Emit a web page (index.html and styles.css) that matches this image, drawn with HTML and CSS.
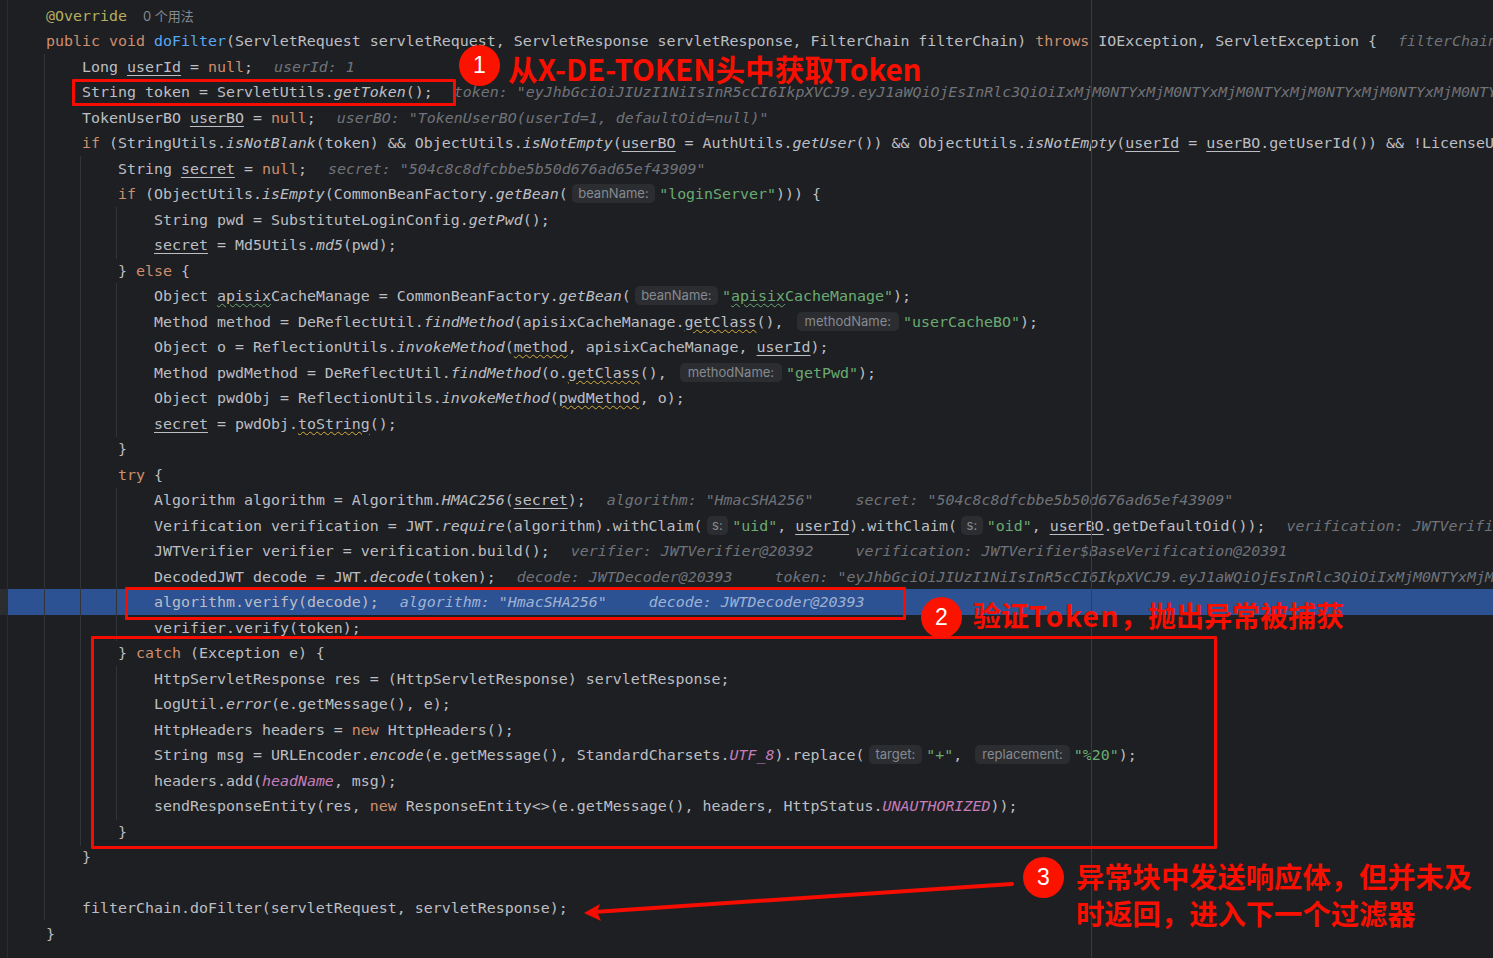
FILE: index.html
```html
<!DOCTYPE html>
<html lang="zh">
<head>
<meta charset="utf-8">
<title>doFilter</title>
<link rel="stylesheet" href="styles.css">
</head>
<body>
<main class="editor">
<div class="line"><span class="ann">@Override</span><span class="usage">0 个用法</span></div>
<div class="line"><span class="kw">public void</span> <span class="fn">doFilter</span>(ServletRequest servletRequest, ServletResponse servletResponse, FilterChain filterChain) <span class="kw">throws</span> IOException, ServletException {<span class="hint">filterChain: ApplicationFilterChain</span></div>
<div class="line i1">Long <u>userId</u> = <span class="kw">null</span>;<span class="hint">userId: 1</span></div>
<div class="line i1">String token = ServletUtils.<i>getToken</i>();<span class="hint">token: "eyJhbGciOiJIUzI1NiIsInR5cCI6IkpXVCJ9.eyJ1aWQiOjEsInRlc3QiOiIxMjM0NTYxMjM0NTYxMjM0NTYxMjM0NTYxMjM0NTYxMjM0NTYxMjM0NTYxMjM0NTYxMjM0NTYxMjM0NTYxMjM0NTY</span></div>
<div class="line i1">TokenUserBO <u>userBO</u> = <span class="kw">null</span>;<span class="hint">userBO: "TokenUserBO(userId=1, defaultOid=null)"</span></div>
<div class="line i1"><span class="kw">if</span> (StringUtils.<i>isNotBlank</i>(token) &amp;&amp; ObjectUtils.<i>isNotEmpty</i>(<u>userBO</u> = AuthUtils.<i>getUser</i>()) &amp;&amp; ObjectUtils.<i>isNotEmpty</i>(<u>userId</u> = <u>userBO</u>.getUserId()) &amp;&amp; !LicenseUtil.isValid()) {</div>
<div class="line i2">String <u>secret</u> = <span class="kw">null</span>;<span class="hint">secret: "504c8c8dfcbbe5b50d676ad65ef43909"</span></div>
<div class="line i2"><span class="kw">if</span> (ObjectUtils.<i>isEmpty</i>(CommonBeanFactory.<i>getBean</i>(<span class="pill pill-bean">beanName:</span><span class="str">"loginServer"</span>))) {</div>
<div class="line i3">String pwd = SubstituteLoginConfig.<i>getPwd</i>();</div>
<div class="line i3"><u>secret</u> = Md5Utils.<i>md5</i>(pwd);</div>
<div class="line i2">} <span class="kw">else</span> {</div>
<div class="line i3">Object <span class="typo">apisix</span>CacheManage = CommonBeanFactory.<i>getBean</i>(<span class="pill pill-bean">beanName:</span><span class="str">"<span class="typo">apisix</span>CacheManage"</span>);</div>
<div class="line i3">Method method = DeReflectUtil.<i>findMethod</i>(apisixCacheManage.<span class="warn">getClass</span>(), <span class="pill pill-method">methodName:</span><span class="str">"userCacheBO"</span>);</div>
<div class="line i3">Object o = ReflectionUtils.<i>invokeMethod</i>(<span class="warn">method</span>, apisixCacheManage, <u>userId</u>);</div>
<div class="line i3">Method pwdMethod = DeReflectUtil.<i>findMethod</i>(o.<span class="warn">getClass</span>(), <span class="pill pill-method">methodName:</span><span class="str">"getPwd"</span>);</div>
<div class="line i3">Object pwdObj = ReflectionUtils.<i>invokeMethod</i>(<span class="warn">pwdMethod</span>, o);</div>
<div class="line i3"><u>secret</u> = pwdObj.<span class="warn">toString</span>();</div>
<div class="line i2">}</div>
<div class="line i2"><span class="kw">try</span> {</div>
<div class="line i3">Algorithm algorithm = Algorithm.<i>HMAC256</i>(<u>secret</u>);<span class="hint">algorithm: "HmacSHA256"</span><span class="hint wide">secret: "504c8c8dfcbbe5b50d676ad65ef43909"</span></div>
<div class="line i3">Verification verification = JWT.<i>require</i>(algorithm).withClaim(<span class="pill pill-short">s:</span><span class="str">"uid"</span>, <u>userId</u>).withClaim(<span class="pill pill-short">s:</span><span class="str">"oid"</span>, <u>userBO</u>.getDefaultOid());<span class="hint">verification: JWTVerifier$BaseVerification@20391</span></div>
<div class="line i3">JWTVerifier verifier = verification.build();<span class="hint">verifier: JWTVerifier@20392</span><span class="hint wide">verification: JWTVerifier$BaseVerification@20391</span></div>
<div class="line i3">DecodedJWT decode = JWT.<i>decode</i>(token);<span class="hint">decode: JWTDecoder@20393</span><span class="hint wide">token: "eyJhbGciOiJIUzI1NiIsInR5cCI6IkpXVCJ9.eyJ1aWQiOjEsInRlc3QiOiIxMjM0NTYxMjM0NTYxMjM0NTY</span></div>
<div class="line i3 current">algorithm.verify(decode);<span class="hint">algorithm: "HmacSHA256"</span><span class="hint wide">decode: JWTDecoder@20393</span></div>
<div class="line i3">verifier.verify(token);</div>
<div class="line i2">} <span class="kw">catch</span> (Exception e) {</div>
<div class="line i3">HttpServletResponse res = (HttpServletResponse) servletResponse;</div>
<div class="line i3">LogUtil.<i>error</i>(e.getMessage(), e);</div>
<div class="line i3">HttpHeaders headers = <span class="kw">new</span> HttpHeaders();</div>
<div class="line i3">String msg = URLEncoder.<i>encode</i>(e.getMessage(), StandardCharsets.<i class="field">UTF_8</i>).replace(<span class="pill">target:</span><span class="str">"+"</span>, <span class="pill">replacement:</span><span class="str">"%20"</span>);</div>
<div class="line i3">headers.add(<i class="field">headName</i>, msg);</div>
<div class="line i3">sendResponseEntity(res, <span class="kw">new</span> ResponseEntity&lt;&gt;(e.getMessage(), headers, HttpStatus.<i class="field">UNAUTHORIZED</i>));</div>
<div class="line i2">}</div>
<div class="line i1">}</div>
<div class="line i1"></div>
<div class="line i1">filterChain.doFilter(servletRequest, servletResponse);</div>
<div class="line">}</div>

<div class="guide g1"></div>
<div class="guide g2"></div>
<div class="guide g3a"></div>
<div class="guide g3b"></div>
<div class="guide g3c"></div>
<div class="guide g3d"></div>
<div class="margin-line"></div>

<div class="box box-token"></div>
<div class="box box-verify"></div>
<div class="box box-catch"></div>

<svg class="arrow" width="1493" height="958" viewBox="0 0 1493 958" aria-hidden="true">
  <path class="arrow-line" d="M1012 884 L594 912"/>
  <path class="arrow-head" d="M584 913 L600 904 L597 912 L601 921 Z"/>
</svg>

<div class="badge b1">1</div>
<div class="badge b2">2</div>
<div class="badge b3">3</div>

<div class="note n1">从X-DE-TOKEN头中获取Token</div>
<div class="note n2">验证<span class="latin">Token</span>，抛出异常被捕获</div>
<div class="note n3">异常块中发送响应体，但并未及<br>时返回，进入下一个过滤器</div>
</main>
</body>
</html>
```
FILE: styles.css
```css
html, body {
  margin: 0;
  padding: 0;
  overflow: hidden;
  background: #1e1f22;
}

.editor {
  position: relative;
  box-sizing: border-box;
  width: 1493px;
  height: 958px;
  overflow: hidden;
  padding: 3.5px 0 0 8px;
  background: #1e1f22;
  color: #bcbec4;
  font-family: "DejaVu Sans Mono", "Noto Sans CJK SC", monospace;
  font-size: 14.95px;
}

.editor::before {
  content: "";
  position: absolute;
  left: 7px;
  top: 0;
  bottom: 0;
  width: 1px;
  background: #2b2d30;
}

.line {
  height: 25.5px;
  line-height: 25.5px;
  padding-left: 38px;
  white-space: pre;
}

.i1 { padding-left: 74px; }
.i2 { padding-left: 110px; }
.i3 { padding-left: 146px; }

.current {
  box-sizing: border-box;
  margin: -1px 0 1px;
  padding-top: 1px;
  background: #2d5293;
  box-shadow: -8px 0 0 #2b2d30;
}

.kw { color: #cf8e6d; }
.fn { color: #56a8f5; }
.ann { color: #b3ae60; }
.str { color: #6aab73; }
.field { color: #c77dbb; }

u {
  text-decoration: underline;
  text-decoration-thickness: 1px;
  text-underline-offset: 3px;
}

.typo {
  text-decoration: underline wavy #6aab73 1px;
  text-underline-offset: 2px;
}

.warn {
  text-decoration: underline wavy #d6ae3c 1px;
  text-underline-offset: 2px;
}

.usage {
  margin-left: 16px;
  color: #868a91;
  font-family: Inter, "Noto Sans CJK SC", sans-serif;
  font-size: 13px;
}

.hint {
  margin-left: 21px;
  color: #6f737a;
  font-style: italic;
}

.hint.wide { margin-left: 42px; }

.current .hint { color: #9fb2d3; }

.pill {
  display: inline-block;
  height: 19px;
  margin: 0 4px 0 4px;
  padding: 0 7px;
  border-radius: 5px;
  background: #2b2d30;
  color: #868a91;
  font-family: Inter, sans-serif;
  font-size: 13px;
  line-height: 19px;
  vertical-align: 1px;
}

.pill-bean { padding: 0 6.5px; }
.pill-method { padding: 0 8px; }
.pill-short { padding: 0 5.5px; }

.guide,
.margin-line {
  position: absolute;
  width: 1px;
  background: #313438;
}

.g1 { left: 44px; top: 54px; height: 866px; }
.g2 { left: 80px; top: 156px; height: 690px; }
.g3a { left: 116px; top: 207px; height: 52px; }
.g3b { left: 116px; top: 283px; height: 154px; }
.g3c { left: 116px; top: 488px; height: 153px; }
.g3d { left: 116px; top: 666px; height: 154px; }
.margin-line { left: 1091px; top: 0; bottom: 0; background: #393b40; }

.box {
  position: absolute;
  box-sizing: border-box;
  border: 3px solid #f60d00;
  border-radius: 1px;
}

.box-token { left: 72px; top: 79px; width: 384px; height: 27px; }
.box-verify { left: 125px; top: 587px; width: 781px; height: 33px; }
.box-catch { left: 91px; top: 636px; width: 1126px; height: 213px; }

.arrow {
  position: absolute;
  left: 0;
  top: 0;
}

.arrow-line {
  fill: none;
  stroke: #f60d00;
  stroke-width: 4px;
  stroke-linecap: round;
}

.arrow-head { fill: #f60d00; }

.badge {
  position: absolute;
  width: 41px;
  height: 41px;
  border-radius: 50%;
  background: #fb1300;
  color: #fff;
  font-family: "Liberation Sans", sans-serif;
  font-size: 23px;
  line-height: 41px;
  text-align: center;
}

.b1 { left: 459px; top: 45px; }
.b2 { left: 921px; top: 597px; }
.b3 { left: 1023px; top: 857px; }

.note {
  position: absolute;
  color: #f80f00;
  font-family: "Noto Sans CJK SC", "Liberation Sans", sans-serif;
  font-weight: 700;
  white-space: nowrap;
}

.n1 { left: 508px; top: 47px; font-size: 29.6px; line-height: 44px; }
.n2 { left: 973px; top: 594px; font-size: 28px; line-height: 42px; }
.n2 .latin { letter-spacing: 1.6px; }
.n3 { left: 1076px; top: 857px; font-size: 28.3px; line-height: 37px; }
```
